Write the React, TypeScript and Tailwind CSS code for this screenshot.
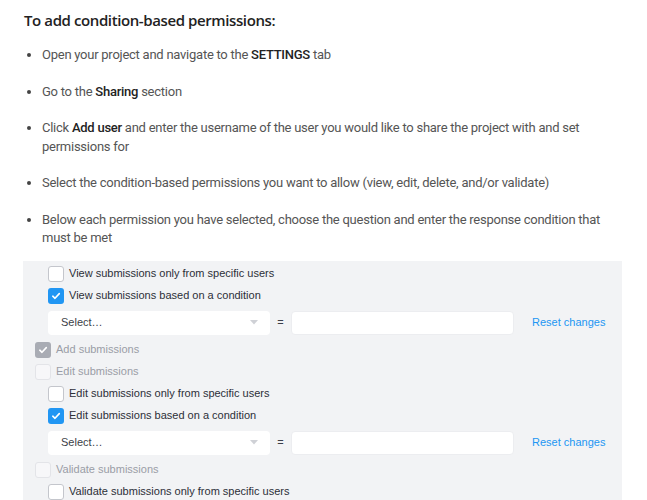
import React from 'react';

const Check = ({ state }: { state: 'off' | 'on' | 'grey' | 'disabled' }) => {
    if (state === 'on' || state === 'grey') {
        return (
            <span className={`w-4 h-4 rounded-[3px] flex items-center justify-center shrink-0 ${state === 'on' ? 'bg-[#2196f3]' : 'bg-[#a9acb4]'}`}>
                <svg width="10" height="10" viewBox="0 0 10 10" fill="none">
                    <path d="M1.8 5.2 L4 7.3 L8.3 2.6" stroke="white" strokeWidth="1.6" strokeLinecap="round" strokeLinejoin="round" />
                </svg>
            </span>
        );
    }
    if (state === 'disabled') {
        return <span className="w-4 h-4 rounded-[3px] bg-[#f7f7f9] border border-[#e3e4e8] shrink-0" />;
    }
    return <span className="w-4 h-4 rounded-[3px] bg-white border border-[#c4c6cc] shrink-0" />;
};

const Row: React.FC<{ label: string; state: 'off' | 'on' | 'grey' | 'disabled'; nested?: boolean; muted?: boolean }> = ({ label, state, nested, muted }) => (
    <div className={`flex items-center h-[22px] gap-[5px] ${nested ? 'pl-[25px]' : 'pl-3'}`}>
        <Check state={state} />
        <span className={muted ? 'text-[#9a9da6]' : 'text-[#2c2f38]'}>{label}</span>
    </div>
);

const ConditionRow = () => (
    <div className="flex items-center h-[32px] pl-[25px]">
        <div className="w-[222px] h-6 bg-white rounded-[4px] flex items-center justify-between pl-[13px] pr-[12px] text-[#3c3f48]">
            <span>Select…</span>
            <svg width="8" height="5" viewBox="0 0 8 5"><path d="M0 0 H8 L4 4.5 Z" fill="#cfd1d6" /></svg>
        </div>
        <span className="w-[21px] text-center text-[#3c3f48]">=</span>
        <div className="w-[223px] h-6 bg-white rounded-[4px] border border-[#ecedf0]" />
        <span className="ml-[18px] text-[#2196f3]">Reset changes</span>
    </div>
);

const steps: React.ReactNode[] = [
    <>Open your project and navigate to the <b className="font-medium text-[#222]">SETTINGS</b> tab</>,
    <>Go to the <b className="font-medium text-[#222]">Sharing</b> section</>,
    <>Click <b className="font-medium text-[#222]">Add user</b> and enter the username of the user you would like to share the project with and set permissions for</>,
    <>Select the condition-based permissions you want to allow (view, edit, delete, and/or validate)</>,
    <>Below each permission you have selected, choose the question and enter the response condition that must be met</>,
];

export default function App() {
    return (
        <div className="bg-white w-[647px] h-[500px] overflow-hidden">
            <div className="pl-6 pt-[10px]">
                <h2 className="font-['Open_Sans',sans-serif] font-semibold text-[15px] tracking-[-0.4px] leading-[20px] text-[#222]">To add condition-based permissions:</h2>
            </div>
            <ul className="mt-[16px] pl-[42px] pr-[40px] list-disc marker:text-[#444] font-['Roboto',sans-serif] text-[13px] tracking-[-0.25px] leading-[18.5px] text-[#555] space-y-[18px]">
                {steps.map((s, i) => <li key={i}>{s}</li>)}
            </ul>
            <div className="mt-[13px] ml-[23px] w-[599px] bg-[#f2f3f5] pt-[2px] font-['Liberation_Sans',Arial,sans-serif] text-[11px]">
                <Row nested label="View submissions only from specific users" state="off" />
                <Row nested label="View submissions based on a condition" state="on" />
                <ConditionRow />
                <Row label="Add submissions" state="grey" muted />
                <Row label="Edit submissions" state="disabled" muted />
                <Row nested label="Edit submissions only from specific users" state="off" />
                <Row nested label="Edit submissions based on a condition" state="on" />
                <ConditionRow />
                <Row label="Validate submissions" state="disabled" muted />
                <Row nested label="Validate submissions only from specific users" state="off" />
                <div className="h-6" />
            </div>
        </div>
    );
}
